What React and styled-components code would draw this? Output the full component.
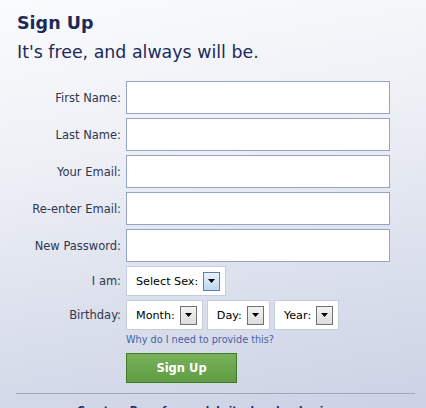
import React from 'react';
import styled, { createGlobalStyle } from 'styled-components';

const GlobalStyle = createGlobalStyle`
    html, body {
        margin: 0;
        padding: 0;
        height: 100%;
    }
    body {
        font-family: "DejaVu Sans", Tahoma, sans-serif;
        overflow: hidden;
    }
`;

const fields = ['First Name:', 'Last Name:', 'Your Email:', 'Re-enter Email:', 'New Password:'];

function Dropdown({ label, active }) {
    return (
        <SelectBox>
            <span>{label}</span>
            <Arrow $active={active}>
                <svg width="7" height="4" viewBox="0 0 7 4">
                    <path d="M0 0h7L3.5 4z" fill="#000" />
                </svg>
            </Arrow>
        </SelectBox>
    );
}

export default function App() {
    return (
        <Page>
            <GlobalStyle />
            <Heading>Sign Up</Heading>
            <Tagline>It's free, and always will be.</Tagline>
            <Form>
                {fields.map((f) => (
                    <React.Fragment key={f}>
                        <Label>{f}</Label>
                        <TextInput type="text" />
                    </React.Fragment>
                ))}
                <Label>I am:</Label>
                <Controls>
                    <Dropdown label="Select Sex:" active />
                </Controls>
                <Label>Birthday:</Label>
                <Controls>
                    <Dropdown label="Month:" />
                    <Dropdown label="Day:" />
                    <Dropdown label="Year:" />
                </Controls>
                <span />
                <HelpLink href="#">Why do I need to provide this?</HelpLink>
                <span />
                <SubmitButton>Sign Up</SubmitButton>
            </Form>
            <Divider />
            <PageLink>Create a Page for a celebrity, band or business.</PageLink>
        </Page>
    );
}

const Page = styled.div`
    height: 408px;
    box-sizing: border-box;
    padding: 12px 11px 0 16px;
    background: linear-gradient(170deg, #fafbfd 0%, #eef0f6 35%, #dadfec 70%, #cbd2e4 100%);
    overflow: hidden;
`;

const Heading = styled.h1`
    margin: 0 0 0 1px;
    font-size: 17.5px;
    line-height: 22px;
    font-weight: bold;
    color: #1d2a5b;
`;

const Tagline = styled.p`
    margin: 6px 0 0 1px;
    font-size: 17.4px;
    line-height: 24px;
    color: #1d2a5b;
`;

const Form = styled.div`
    display: grid;
    grid-template-columns: 105px 264px;
    column-gap: 5px;
    row-gap: 4px;
    margin-top: 17px;
    align-items: center;
`;

const Label = styled.label`
    text-align: right;
    font-size: 11.5px;
    color: #2f3651;
`;

const TextInput = styled.input`
    box-sizing: border-box;
    height: 33px;
    width: 264px;
    margin: 0;
    border: 1px solid #96a4c4;
    background: #fff;
    outline: none;
`;

const Controls = styled.div`
    display: flex;
    gap: 4px;
`;

const SelectBox = styled.div`
    display: flex;
    align-items: center;
    gap: 5px;
    height: 30px;
    box-sizing: border-box;
    padding: 0 5px 0 9px;
    background: #fff;
    border: 1px solid #c5cde0;
    font-size: 11.2px;
    color: #000;
`;

const Arrow = styled.span`
    display: flex;
    align-items: center;
    justify-content: center;
    box-sizing: border-box;
    width: 17px;
    height: 19px;
    border: 1px solid ${(p) => (p.$active ? '#5f7fb4' : '#707070')};
    background: ${(p) =>
        p.$active
            ? 'linear-gradient(#e9f2fb, #bfd7ef)'
            : 'linear-gradient(#f3f3f3, #dcdcdc)'};
`;

const HelpLink = styled.a`
    font-size: 9.7px;
    line-height: 12px;
    color: #4a5ea6;
    text-decoration: none;
`;

const SubmitButton = styled.button`
    width: 111px;
    height: 30px;
    margin-top: 3px;
    border: 1px solid #3f7a25;
    background: linear-gradient(#78b25c, #5f9c43);
    color: #fff;
    font-family: "DejaVu Sans", Tahoma, sans-serif;
    font-weight: bold;
    font-size: 11.5px;
    cursor: pointer;
`;

const Divider = styled.hr`
    margin: 10px 0 0 0;
    border: none;
    border-top: 1px solid #a0a8bc;
`;

const PageLink = styled.p`
    margin: 10px 0 0;
    text-align: center;
    font-weight: bold;
    font-size: 10.3px;
    line-height: 12px;
    color: #1d2a5b;
`;
